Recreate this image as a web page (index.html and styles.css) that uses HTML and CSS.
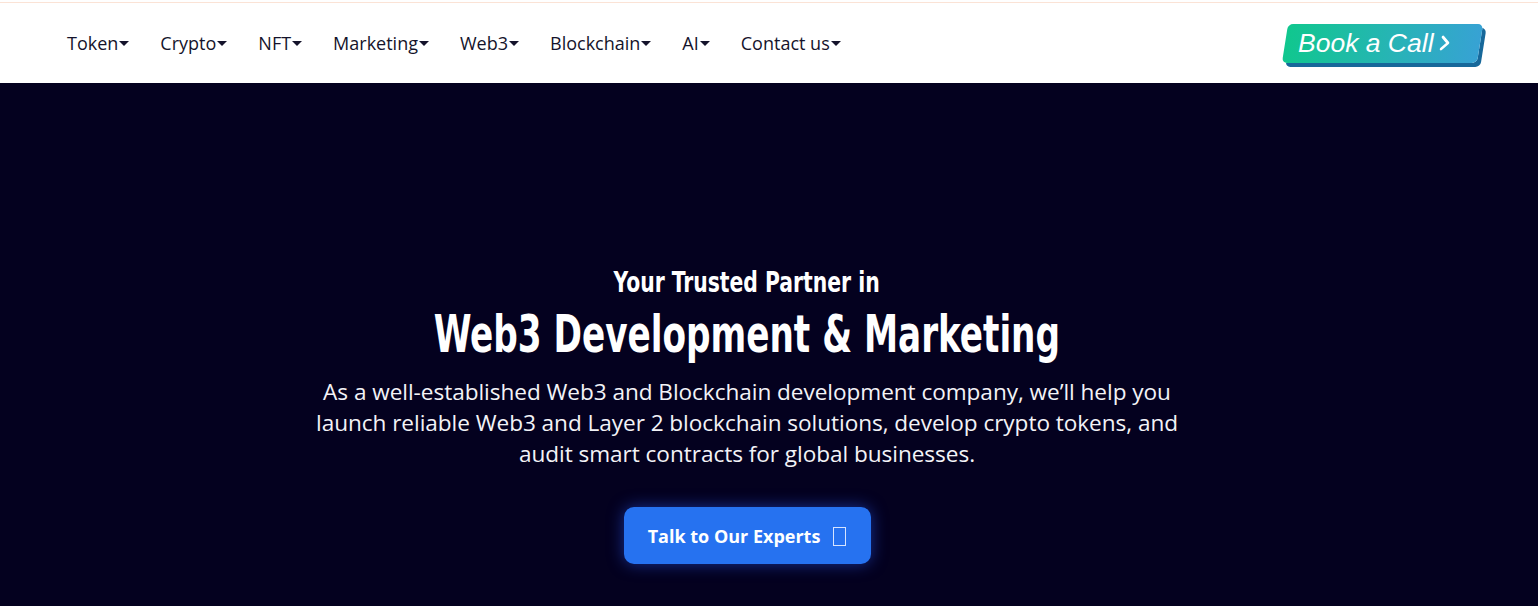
FILE: index.html
```html
<!DOCTYPE html>
<html lang="en">
<head>
<meta charset="utf-8">
<title>Web3 Development &amp; Marketing</title>
<link rel="stylesheet" href="styles.css">
</head>
<body>
<header class="header">
  <nav class="nav">
    <a class="nav-item" href="#">Token<span class="caret"></span></a>
    <a class="nav-item" href="#">Crypto<span class="caret"></span></a>
    <a class="nav-item" href="#">NFT<span class="caret"></span></a>
    <a class="nav-item" href="#">Marketing<span class="caret"></span></a>
    <a class="nav-item" href="#">Web3<span class="caret"></span></a>
    <a class="nav-item" href="#">Blockchain<span class="caret"></span></a>
    <a class="nav-item" href="#">AI<span class="caret"></span></a>
    <a class="nav-item" href="#">Contact us<span class="caret"></span></a>
  </nav>
  <a class="book" href="#"><span class="book-text">Book a Call<svg class="chev" viewBox="0 0 10 16" width="10" height="16"><path d="M2 2 L8 8 L2 14" fill="none" stroke="#fff" stroke-width="2.6" stroke-linecap="round" stroke-linejoin="round"/></svg></span></a>
</header>
<section class="hero">
  <div class="hero-inner">
    <h2 class="kicker"><span class="narrow">Your Trusted Partner in</span></h2>
    <h1 class="title"><span class="narrow">Web3 Development &amp; Marketing</span></h1>
    <p class="lead">As a well-established Web3 and Blockchain development company, we’ll help you launch reliable Web3 and Layer 2 blockchain solutions, develop crypto tokens, and audit smart contracts for global businesses.</p>
    <a class="cta" href="#">Talk to Our Experts <span class="tofu"></span></a>
  </div>
</section>
</body>
</html>
```

FILE: styles.css
```css
* { box-sizing: border-box; }
html, body { margin: 0; padding: 0; }
body {
  font-family: "Open Sans", "Liberation Sans", sans-serif;
  background: #04011f;
  width: 1538px;
  height: 606px;
  overflow: hidden;
}
a { text-decoration: none; }

.header {
  background: #fff;
  height: 83px;
  padding: 2px 54px 0 67px;
  display: flex;
  align-items: center;
  justify-content: space-between;
  position: relative;
}
.header::before {
  content: "";
  position: absolute;
  left: 0; right: 0; top: 2px;
  height: 1px;
  background: #fbe3d6;
}
.nav {
  display: flex;
  align-items: center;
  gap: 31px;
}
.nav-item {
  font-size: 18px;
  color: #14132b;
  display: flex;
  align-items: center;
}
.caret {
  width: 0; height: 0;
  border-left: 5px solid transparent;
  border-right: 5px solid transparent;
  border-top: 5px solid #14132b;
  margin-left: 1px;
  margin-top: 2px;
}

.book {
  display: flex;
  align-items: center;
  height: 39px;
  width: 195px;
  margin-top: 2px;
  margin-right: 4px;
  padding-left: 13px;
  transform: skewX(-9deg);
  border-radius: 5px;
  background: linear-gradient(90deg, #10c78e 0%, #27b4b5 55%, #37a2d4 100%);
  box-shadow: 4px 4px 0 #17689a;
}
.book-text {
  transform: skewX(9deg);
  font-family: "Liberation Sans", Arial, sans-serif;
  font-style: italic;
  font-size: 26.5px;
  color: #fff;
  display: flex;
  align-items: center;
  gap: 6px;
  white-space: nowrap;
}
.chev { transform: skewX(-9deg); margin-top: -2px; }

.hero {
  height: 523px;
  background: #04011f;
  display: flex;
  justify-content: center;
  padding-right: 44px;
}
.hero-inner {
  display: flex;
  flex-direction: column;
  align-items: center;
  padding-top: 181px;
  color: #fff;
  text-align: center;
}
.kicker, .title {
  margin: 0;
  font-family: "DejaVu Sans Condensed", "DejaVu Sans", sans-serif;
  font-weight: 700;
  white-space: nowrap;
}
.narrow { display: inline-block; }
.kicker {
  font-size: 29px;
  line-height: 36px;
}
.kicker .narrow { transform: scaleX(0.78); }
.title {
  margin-top: 4px;
  font-size: 52px;
  line-height: 60px;
}
.title .narrow { transform: scaleX(0.732); }
.lead {
  margin: 12px 0 0;
  width: 880px;
  font-size: 22.6px;
  line-height: 31px;
  letter-spacing: -0.05px;
  color: #f3f3f7;
}
.cta {
  margin-top: 38px;
  width: 247px;
  height: 57px;
  border-radius: 10px;
  background: #2672f0;
  color: #fff;
  font-weight: 700;
  font-size: 18px;
  display: flex;
  align-items: center;
  justify-content: center;
  gap: 13px;
  box-shadow: 0 0 16px rgba(38, 90, 240, 0.55);
}
.tofu {
  width: 13px;
  height: 19px;
  border: 1.5px solid #d6e4ff;
  margin-top: 1px;
}
```
